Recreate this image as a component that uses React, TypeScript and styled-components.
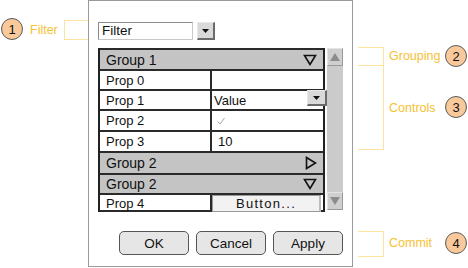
import React from "react";
import styled, { createGlobalStyle } from "styled-components";

const Global = createGlobalStyle`
  html, body { margin: 0; padding: 0; background: #fff; }
  body { font-family: "Liberation Sans", Arial, sans-serif; color: #111; }
`;

const Stage = styled.div`
  position: relative;
  width: 468px;
  height: 268px;
  overflow: hidden;
`;

const Panel = styled.div`
  box-sizing: border-box;
  margin-left: 88px;
  width: 265px;
  height: 267px;
  border: 1px solid #9a9a9a;
  padding: 21px 9px 0 9px;
  display: flex;
  flex-direction: column;
`;

const FilterRow = styled.div`
  display: flex;
  gap: 4px;
  height: 18px;
`;

const FilterInput = styled.div`
  box-sizing: border-box;
  width: 95px;
  height: 18px;
  border: 1px solid #8c8c8c;
  border-right-color: #c8c8c8;
  border-bottom-color: #c8c8c8;
  background: #fff;
  font-size: 13.5px;
  line-height: 16px;
  padding-left: 3px;
`;

const DropButton = styled.div`
  box-sizing: border-box;
  width: 18px;
  height: 18px;
  background: #d9d9d9;
  border: 1px solid #e8e8e8;
  border-right: 2px solid #6a6a6a;
  border-bottom: 2px solid #6a6a6a;
  display: flex;
  align-items: center;
  justify-content: center;
`;

const TableArea = styled.div`
  display: flex;
  gap: 2px;
  margin-top: 8px;
  height: 164px;
`;

const Table = styled.div`
  box-sizing: border-box;
  width: 227px;
  display: flex;
  flex-direction: column;
  border-left: 2px solid #222;
  border-right: 2px solid #222;
`;

const GroupRow = styled.div<{ $h: number }>`
  box-sizing: border-box;
  height: ${(p) => p.$h}px;
  background: #c4c4c4;
  border-top: 2px solid #2a2a2a;
  display: flex;
  align-items: center;
  justify-content: space-between;
  padding: 0 6px 0 6px;
  font-size: 14px;
`;

const PropRow = styled.div<{ $h: number; $last?: boolean }>`
  box-sizing: border-box;
  height: ${(p) => p.$h}px;
  border-top: 2px solid #2a2a2a;
  ${(p) => (p.$last ? "border-bottom: 2px solid #2a2a2a;" : "")}
  display: grid;
  grid-template-columns: 112px 1fr;
  background: #fff;
  font-size: 13px;
`;

const Label = styled.div`
  border-right: 2px solid #2a2a2a;
  padding-left: 6px;
  display: flex;
  align-items: center;
`;

const Value = styled.div<{ $pad?: number }>`
  position: relative;
  display: flex;
  align-items: center;
  padding-left: ${(p) => p.$pad ?? 2}px;
`;

const SelectDrop = styled(DropButton)`
  position: absolute;
  right: -4px;
  top: -1px;
  width: 20px;
  height: 16px;
`;

const CellButton = styled.div`
  box-sizing: border-box;
  margin: 0 2px 0 0;
  flex: 1;
  height: 17px;
  background: #f2f2f2;
  border: 1px solid #9a9a9a;
  border-right: 2px solid #bdbdbd;
  display: flex;
  align-items: center;
  justify-content: center;
  font-size: 13px;
  letter-spacing: 1.3px;
`;

const Scrollbar = styled.div`
  width: 16px;
  height: 162px;
  background: #cbcbcb;
  display: flex;
  flex-direction: column;
  justify-content: space-between;
`;

const ScrollBtn = styled.div`
  box-sizing: border-box;
  width: 16px;
  height: 18px;
  background: #cfcfcf;
  border: 1px solid #e4e4e4;
  border-right-color: #9a9a9a;
  border-bottom-color: #9a9a9a;
  display: flex;
  align-items: center;
  justify-content: center;
`;

const ButtonRow = styled.div`
  display: flex;
  justify-content: flex-end;
  gap: 7px;
  margin-top: 19px;
`;

const Btn = styled.button`
  box-sizing: border-box;
  width: 70px;
  height: 24px;
  background: #e6e6e6;
  border: 1.5px solid #555;
  border-radius: 5px;
  font-family: "Liberation Sans", Arial, sans-serif;
  font-size: 13.5px;
  color: #111;
  padding: 0;
`;

const Callout = styled.div<{ $x: number; $y: number }>`
  position: absolute;
  left: ${(p) => p.$x}px;
  top: ${(p) => p.$y}px;
`;

const Badge = styled(Callout)`
  box-sizing: border-box;
  width: 22px;
  height: 22px;
  border-radius: 50%;
  background: #f9c99c;
  border: 1px solid #5a5a5a;
  display: flex;
  align-items: center;
  justify-content: center;
  font-size: 13px;
  color: #111;
`;

const Note = styled(Callout)`
  font-size: 12.5px;
  color: #f6c133;
  line-height: 14px;
`;

const Bracket = styled(Callout)<{ $w: number; $h: number; $open: "left" | "right" }>`
  box-sizing: border-box;
  width: ${(p) => p.$w}px;
  height: ${(p) => p.$h}px;
  border: 1px solid #fde2a0;
  border-${(p) => p.$open}: none;
`;

const TriDown = () => (
  <svg width="14" height="12" viewBox="0 0 14 12">
    <polygon points="1.5,1.5 12.5,1.5 7,10.5" fill="none" stroke="#111" strokeWidth="1.6" />
  </svg>
);
const TriRight = () => (
  <svg width="12" height="14" viewBox="0 0 12 14">
    <polygon points="1.5,1.5 10.5,7 1.5,12.5" fill="none" stroke="#111" strokeWidth="1.6" />
  </svg>
);
const SmallArrow = () => (
  <svg width="7" height="4" viewBox="0 0 7 4">
    <polygon points="0,0 7,0 3.5,4" fill="#111" />
  </svg>
);
const ScrollArrow = ({ up }: { up?: boolean }) => (
  <svg width="10" height="8" viewBox="0 0 10 8">
    <polygon points={up ? "0,8 10,8 5,0" : "0,0 10,0 5,8"} fill="#8c8c8c" />
  </svg>
);
const Check = () => (
  <svg width="10" height="10" viewBox="0 0 10 10">
    <polyline points="1.5,5.5 4,8 8.5,2" fill="none" stroke="#a8a8a8" strokeWidth="1" />
  </svg>
);

export default function App() {
  return (
    <Stage>
      <Global />
      <Panel>
        <FilterRow>
          <FilterInput>Filter</FilterInput>
          <DropButton>
            <SmallArrow />
          </DropButton>
        </FilterRow>
        <TableArea>
          <Table>
            <GroupRow $h={21}>
              <span>Group 1</span>
              <TriDown />
            </GroupRow>
            <PropRow $h={20}>
              <Label>Prop 0</Label>
              <Value />
            </PropRow>
            <PropRow $h={20}>
              <Label>Prop 1</Label>
              <Value>
                Value
                <SelectDrop>
                  <SmallArrow />
                </SelectDrop>
              </Value>
            </PropRow>
            <PropRow $h={21}>
              <Label>Prop 2</Label>
              <Value $pad={4}>
                <Check />
              </Value>
            </PropRow>
            <PropRow $h={21}>
              <Label>Prop 3</Label>
              <Value $pad={6}>10</Value>
            </PropRow>
            <GroupRow $h={22}>
              <span>Group 2</span>
              <TriRight />
            </GroupRow>
            <GroupRow $h={20}>
              <span>Group 2</span>
              <TriDown />
            </GroupRow>
            <PropRow $h={19} $last>
              <Label>Prop 4</Label>
              <Value $pad={0}>
                <CellButton>Button...</CellButton>
              </Value>
            </PropRow>
          </Table>
          <Scrollbar>
            <ScrollBtn>
              <ScrollArrow up />
            </ScrollBtn>
            <ScrollBtn>
              <ScrollArrow />
            </ScrollBtn>
          </Scrollbar>
        </TableArea>
        <ButtonRow>
          <Btn>OK</Btn>
          <Btn>Cancel</Btn>
          <Btn>Apply</Btn>
        </ButtonRow>
      </Panel>

      <Badge $x={1} $y={18}>1</Badge>
      <Note $x={30} $y={23}>Filter</Note>
      <Bracket $x={64} $y={20} $w={24} $h={20} $open="right" />

      <Bracket $x={358} $y={47} $w={26} $h={19} $open="left" />
      <Note $x={389} $y={49}>Grouping</Note>
      <Badge $x={445} $y={45}>2</Badge>

      <Bracket $x={358} $y={65} $w={26} $h={85} $open="left" />
      <Note $x={389} $y={101}>Controls</Note>
      <Badge $x={445} $y={96}>3</Badge>

      <Bracket $x={358} $y={231} $w={26} $h={26} $open="left" />
      <Note $x={389} $y={236}>Commit</Note>
      <Badge $x={445} $y={232}>4</Badge>
    </Stage>
  );
}
